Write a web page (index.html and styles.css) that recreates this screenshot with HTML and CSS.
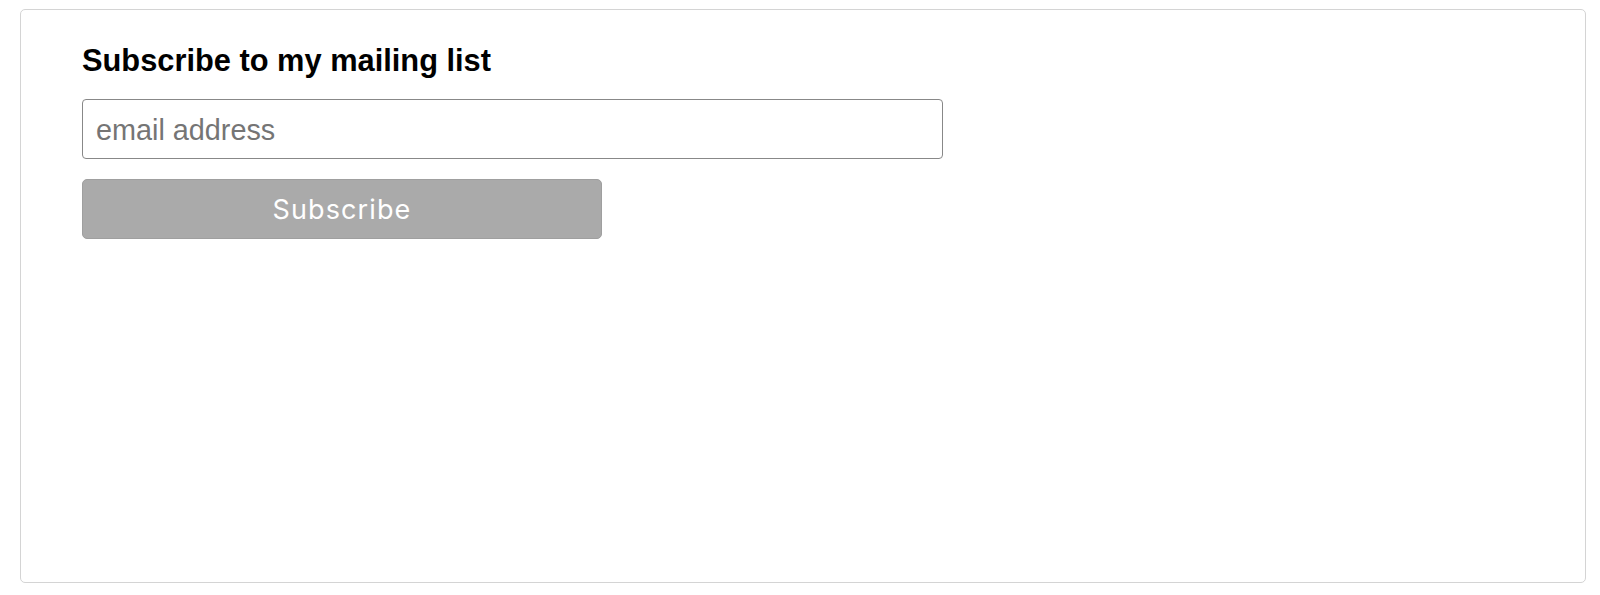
FILE: index.html
```html
<!DOCTYPE html>
<html lang="en">
<head>
<meta charset="utf-8">
<title>Subscribe</title>
<link rel="stylesheet" href="styles.css">
</head>
<body>
  <div class="card">
    <form class="subscribe-form">
      <h2 class="title">Subscribe to my mailing list</h2>
      <input class="email" type="email" placeholder="email address">
      <button class="btn" type="button">Subscribe</button>
    </form>
  </div>
</body>
</html>
```

FILE: styles.css
```css
html, body {
  margin: 0;
  padding: 0;
  background: #ffffff;
}
body {
  padding: 9px 14px 13px 20px;
  font-family: "Liberation Sans", Arial, sans-serif;
}
.card {
  box-sizing: border-box;
  height: 574px;
  border: 1px solid #d4d4d4;
  border-radius: 5px;
  padding: 32px 0 0 61px;
}
.subscribe-form {
  display: flex;
  flex-direction: column;
  align-items: flex-start;
}
.title {
  margin: 0;
  font-family: "Liberation Sans", Arial, sans-serif;
  font-weight: 700;
  font-size: 30.8px;
  line-height: 38px;
  color: #000;
}
.email {
  box-sizing: border-box;
  margin-top: 19px;
  width: 861px;
  height: 60px;
  border: 1px solid #888888;
  border-radius: 4px;
  padding: 2px 13px 0;
  font-family: "Liberation Sans", Arial, sans-serif;
  font-size: 28.8px;
  color: #333;
  background: #fff;
  outline: none;
}
.email::placeholder {
  color: #757575;
}
.btn {
  box-sizing: border-box;
  margin-top: 20px;
  width: 520px;
  height: 60px;
  border: 1px solid #9f9f9f;
  border-radius: 5px;
  background: #aaaaaa;
  color: #ffffff;
  font-family: Inter, "Noto Sans", sans-serif;
  font-size: 27px;
  letter-spacing: 1.1px;
  font-weight: 400;
  padding: 0;
}
```
